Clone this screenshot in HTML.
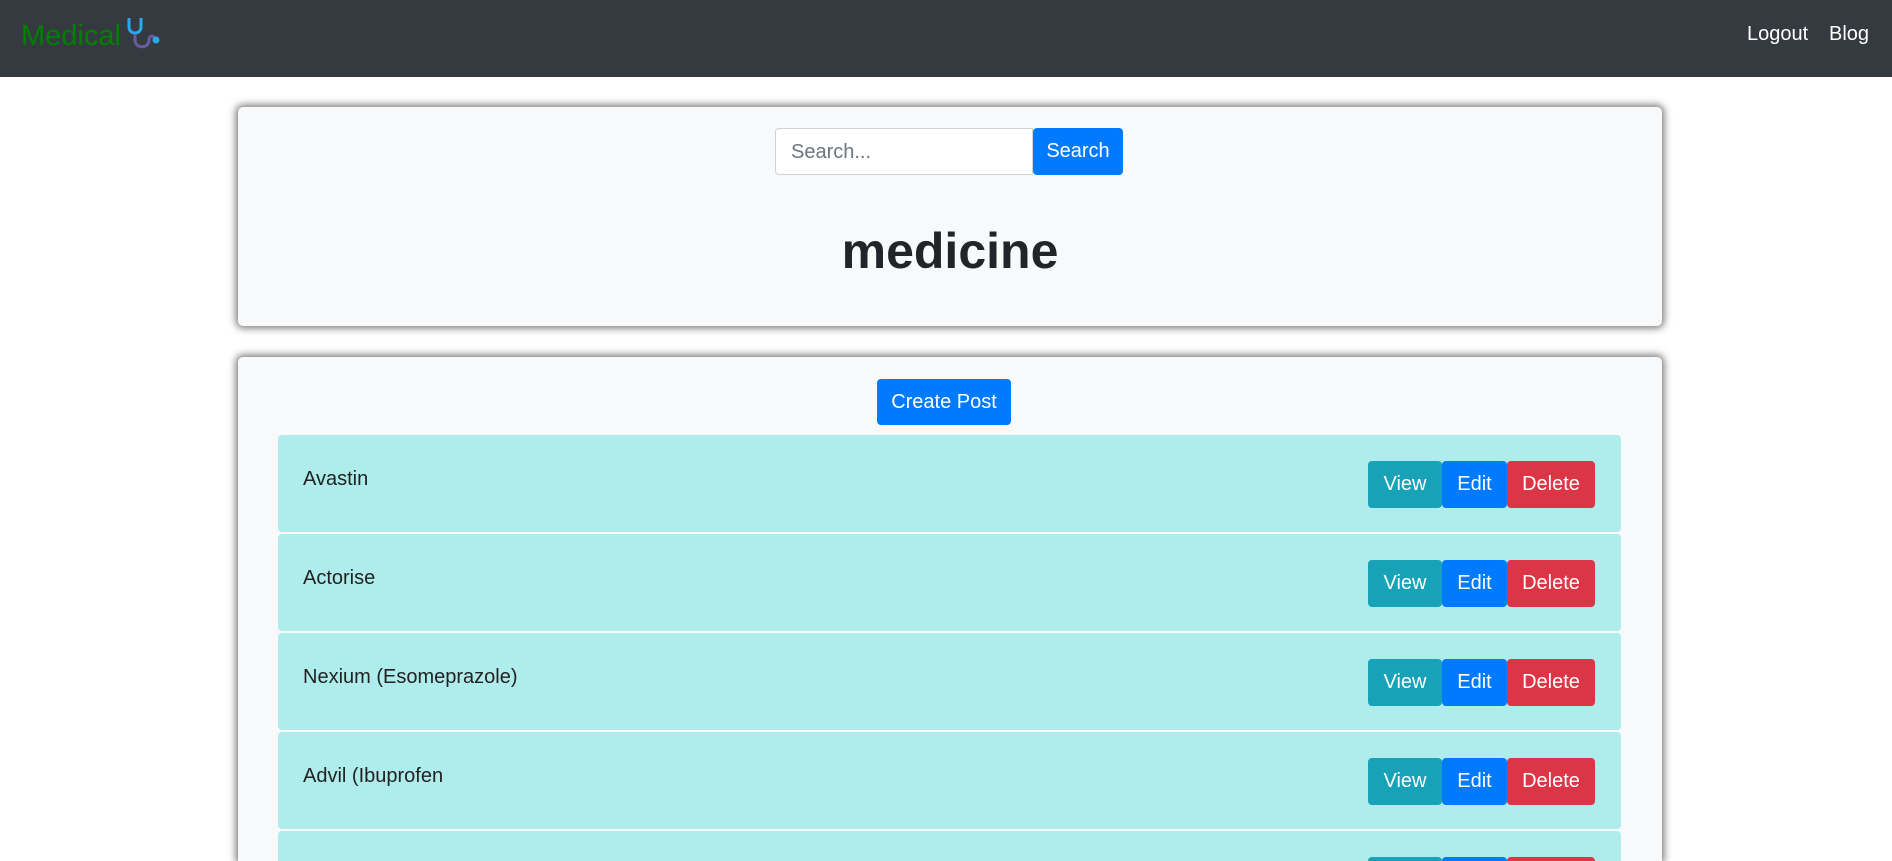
<!DOCTYPE html>
<html style="overflow:hidden;height:861px"><head><style>
body{margin:0;background:#fff;font-family:"Liberation Sans",sans-serif;width:1892px;height:861px;overflow:hidden;position:relative}
.nav{position:absolute;left:0;top:0;width:1892px;height:77px;background:#343a40}
.logo{position:absolute;left:21px;top:15px;color:#008000;font-size:29px;line-height:34px}
.nav a{position:absolute;top:22px;color:#fff;font-size:20px;line-height:24px}
.card{position:absolute;left:238px;width:1424px;background:#f8f9fa;border-radius:5px;box-shadow:0 0 8px 2px rgba(0,0,0,.55)}
.btn{position:absolute;color:#fff;font-size:20px;display:flex;align-items:center;justify-content:center;border-radius:4px}
.row{position:absolute;left:40px;width:1343px;height:97px;background:#afecec;border-radius:4px}
.row span{position:absolute;left:25px;top:33px;font-size:20px;color:#222}
</style></head><body>
<div class="nav">
<div class="logo">Medical<svg width="40" height="36" viewBox="0 0 40 36" style="vertical-align:-6px;margin-left:3px"><path d="M5 3v9c0 8 12 8 12 0V3" fill="none" stroke="#2aa9e8" stroke-width="3"/><path d="M11 19v6c0 9 14 9 14 0c0-5 5-5 6-1" fill="none" stroke="#6a5c9c" stroke-width="3"/><circle cx="32" cy="25" r="3.5" fill="#2aa9e8"/></svg></div>
<a style="left:1747px">Logout</a><a style="left:1829px">Blog</a>
</div>
<div class="card" style="top:107px;height:219px">
<div style="position:absolute;left:537px;top:21px;width:256px;height:45px;border:1px solid #ced4da;background:#fff;border-radius:4px 0 0 4px"><span style="position:absolute;left:15px;top:12px;font-size:20px;color:#6c757d">Search...</span></div>
<div class="btn" style="left:795px;top:21px;width:90px;height:47px;background:#007bff">Search</div>
<div style="position:absolute;left:0;width:100%;top:114px;text-align:center;font-size:50px;font-weight:bold;color:#212529;line-height:60px">medicine</div>
</div>
<div class="card" style="top:357px;height:504px;border-radius:5px 5px 0 0">
<div style="position:absolute;left:0;top:0;width:1424px;height:504px;overflow:hidden">
<div class="btn" style="left:639px;top:22px;width:134px;height:46px;background:#007bff">Create Post</div>
<div class="row" style="top:78px"><span>Avastin</span></div>
<div class="row" style="top:177px"><span>Actorise</span></div>
<div class="row" style="top:276px"><span>Nexium (Esomeprazole)</span></div>
<div class="row" style="top:375px"><span>Advil (Ibuprofen</span></div>
<div class="row" style="top:474px"></div>
<div id="btns"></div>
</div>
</div>
<script>
var h='';[104,203,302,401,500].forEach(function(y){
h+='<div class="btn" style="left:1130px;top:'+y+'px;width:74px;height:47px;background:#17a2b8">View</div>';
h+='<div class="btn" style="left:1204px;top:'+y+'px;width:65px;height:47px;background:#007bff">Edit</div>';
h+='<div class="btn" style="left:1269px;top:'+y+'px;width:88px;height:47px;background:#dc3545">Delete</div>';});
document.getElementById('btns').innerHTML=h;
</script>
</body></html>
